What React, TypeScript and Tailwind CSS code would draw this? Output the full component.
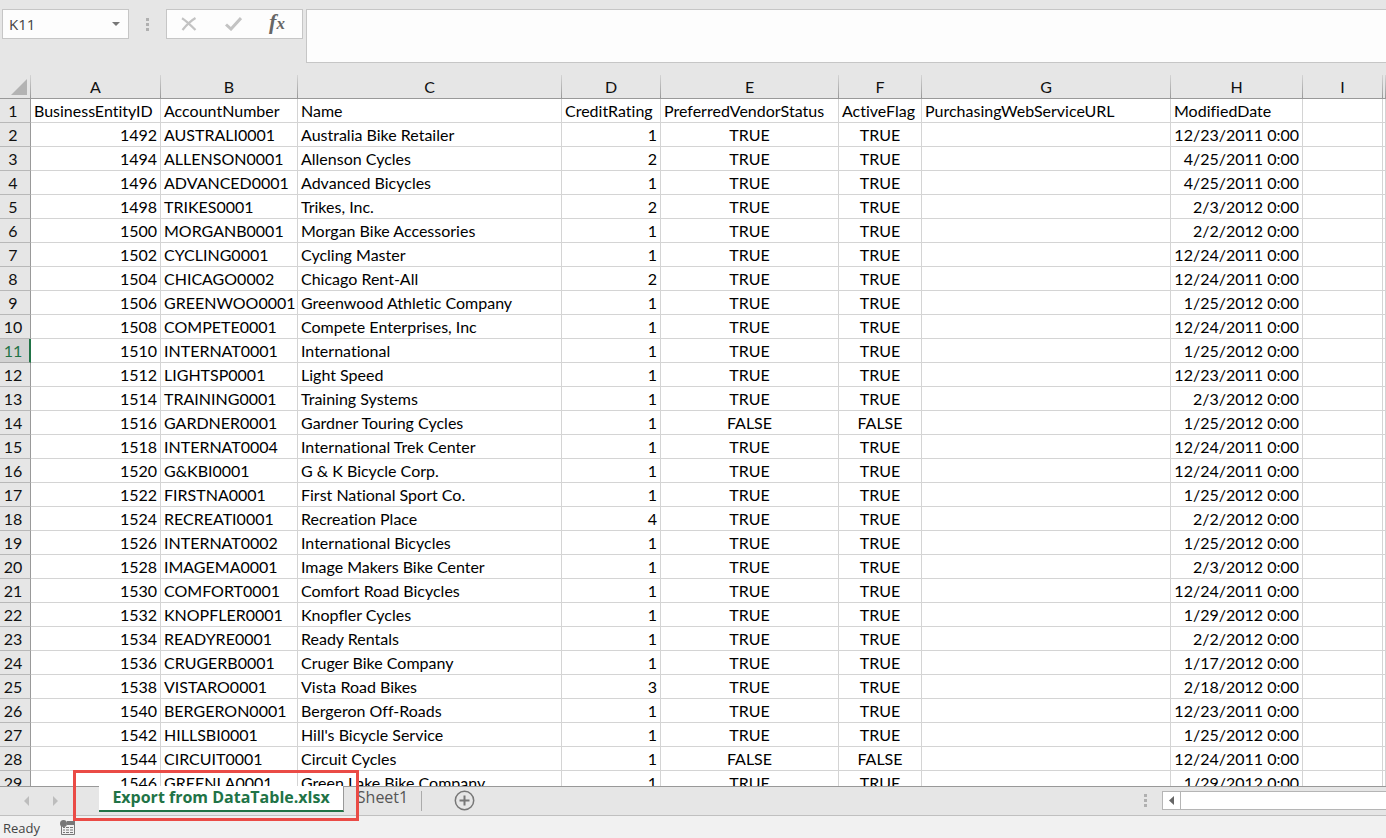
import React from 'react';

type Vendor = [number, string, string, number, boolean, string];

const vendors: Vendor[] = [
  [1492, 'AUSTRALI0001', 'Australia Bike Retailer', 1, true, '12/23/2011 0:00'],
  [1494, 'ALLENSON0001', 'Allenson Cycles', 2, true, '4/25/2011 0:00'],
  [1496, 'ADVANCED0001', 'Advanced Bicycles', 1, true, '4/25/2011 0:00'],
  [1498, 'TRIKES0001', 'Trikes, Inc.', 2, true, '2/3/2012 0:00'],
  [1500, 'MORGANB0001', 'Morgan Bike Accessories', 1, true, '2/2/2012 0:00'],
  [1502, 'CYCLING0001', 'Cycling Master', 1, true, '12/24/2011 0:00'],
  [1504, 'CHICAGO0002', 'Chicago Rent-All', 2, true, '12/24/2011 0:00'],
  [1506, 'GREENWOO0001', 'Greenwood Athletic Company', 1, true, '1/25/2012 0:00'],
  [1508, 'COMPETE0001', 'Compete Enterprises, Inc', 1, true, '12/24/2011 0:00'],
  [1510, 'INTERNAT0001', 'International', 1, true, '1/25/2012 0:00'],
  [1512, 'LIGHTSP0001', 'Light Speed', 1, true, '12/23/2011 0:00'],
  [1514, 'TRAINING0001', 'Training Systems', 1, true, '2/3/2012 0:00'],
  [1516, 'GARDNER0001', 'Gardner Touring Cycles', 1, false, '1/25/2012 0:00'],
  [1518, 'INTERNAT0004', 'International Trek Center', 1, true, '12/24/2011 0:00'],
  [1520, 'G&KBI0001', 'G & K Bicycle Corp.', 1, true, '12/24/2011 0:00'],
  [1522, 'FIRSTNA0001', 'First National Sport Co.', 1, true, '1/25/2012 0:00'],
  [1524, 'RECREATI0001', 'Recreation Place', 4, true, '2/2/2012 0:00'],
  [1526, 'INTERNAT0002', 'International Bicycles', 1, true, '1/25/2012 0:00'],
  [1528, 'IMAGEMA0001', 'Image Makers Bike Center', 1, true, '2/3/2012 0:00'],
  [1530, 'COMFORT0001', 'Comfort Road Bicycles', 1, true, '12/24/2011 0:00'],
  [1532, 'KNOPFLER0001', 'Knopfler Cycles', 1, true, '1/29/2012 0:00'],
  [1534, 'READYRE0001', 'Ready Rentals', 1, true, '2/2/2012 0:00'],
  [1536, 'CRUGERB0001', 'Cruger Bike Company', 1, true, '1/17/2012 0:00'],
  [1538, 'VISTARO0001', 'Vista Road Bikes', 3, true, '2/18/2012 0:00'],
  [1540, 'BERGERON0001', 'Bergeron Off-Roads', 1, true, '12/23/2011 0:00'],
  [1542, 'HILLSBI0001', "Hill's Bicycle Service", 1, true, '1/25/2012 0:00'],
  [1544, 'CIRCUIT0001', 'Circuit Cycles', 1, false, '12/24/2011 0:00'],
  [1546, 'GREENLA0001', 'Green Lake Bike Company', 1, true, '1/29/2012 0:00'],
];

const fields = [
  'BusinessEntityID',
  'AccountNumber',
  'Name',
  'CreditRating',
  'PreferredVendorStatus',
  'ActiveFlag',
  'PurchasingWebServiceURL',
  'ModifiedDate',
  '',
  '',
];

const letters = ['A', 'B', 'C', 'D', 'E', 'F', 'G', 'H', 'I', ''];

const alignments = [
  'text-right',
  'text-left',
  'text-left',
  'text-right',
  'text-center',
  'text-center',
  'text-left',
  'text-right',
  'text-left',
  'text-left',
];

const SELECTED_ROW = 11;

function Grip() {
  return (
    <svg width="3" height="13" viewBox="0 0 3 13" fill="#b0b0b0" aria-hidden="true">
      <path d="M0 0h3v3H0zM0 5h3v3H0zM0 10h3v3H0z" />
    </svg>
  );
}

function FormulaBar() {
  return (
    <header className="flex shrink-0 items-start pt-[9px] font-['Open_Sans',sans-serif]">
      <div className="ml-0.5 flex h-[30px] w-[127px] items-center border border-[#c6c6c6] bg-[#fdfdfd]">
        <input
          aria-label="Name Box"
          defaultValue="K11"
          className="h-full min-w-0 flex-1 bg-transparent pl-1.5 text-[15px] text-[#444] outline-none"
        />
        <button aria-label="Show defined names" className="flex h-full w-6 items-center justify-center">
          <svg width="8" height="4" viewBox="0 0 8 4" fill="#777">
            <path d="M0 0h8L4 4z" />
          </svg>
        </button>
      </div>
      <div className="flex h-[30px] w-[37px] items-center justify-center">
        <Grip />
      </div>
      <div className="flex h-[30px] w-[137px] items-center border border-[#c6c6c6] bg-[#fdfdfd] pr-[3px]">
        <button aria-label="Cancel" className="flex h-full flex-1 items-center justify-center">
          <svg width="16" height="14" viewBox="0 0 16 14" fill="none" stroke="#c3c3c3" strokeWidth="2.2">
            <path d="M1 1.2C5 3.5 10 8.500 14.500 13" />
            <path d="M14.500 1C9.500 4 5 8.500 1.500 13" />
          </svg>
        </button>
        <button aria-label="Enter" className="flex h-full flex-1 items-center justify-center">
          <svg width="17" height="14" viewBox="0 0 17 14" fill="none" stroke="#c3c3c3" strokeWidth="3">
            <path d="M1 7.500L6 12L16 1" />
          </svg>
        </button>
        <button
          aria-label="Insert Function"
          className="flex h-full flex-1 items-center justify-center pb-1 font-['Liberation_Serif',serif] text-[#666] italic"
        >
          <span className="text-[22px] leading-6 font-bold">f</span>
          <span className="pt-1 text-[17px] leading-6 font-bold">x</span>
        </button>
      </div>
      <input
        aria-label="Formula Bar"
        className="ml-[3px] h-[54px] min-w-0 flex-1 border border-r-0 border-[#c6c6c6] bg-[#fdfdfd] px-2 text-sm outline-none"
      />
    </header>
  );
}

function RowHeader({ n }: { n: number }) {
  const selected = n === SELECTED_ROW;
  return (
    <th
      scope="row"
      className={
        selected
          ? 'border-r-2 border-b border-r-[#217346] border-b-[#ababab] bg-[#d2d2d2] pr-[3px] text-center font-normal text-[#217346]'
          : 'border-r border-b border-r-[#999] border-b-[#b8b8b8] bg-[#e6e6e6] pr-1 text-center font-normal text-[#111]'
      }
    >
      {n}
    </th>
  );
}

function Grid() {
  return (
    <main className="min-h-0 flex-1 overflow-hidden border-b border-[#999] pt-3">
      <table className="w-full table-fixed border-separate border-spacing-0 font-['Lato',sans-serif] text-base leading-[23px] whitespace-nowrap text-black [font-variant-ligatures:none]">
        <colgroup>
          <col className="w-[31px]" />
          <col className="w-[130px]" />
          <col className="w-[137px]" />
          <col className="w-[264px]" />
          <col className="w-[99px]" />
          <col className="w-[178px]" />
          <col className="w-[83px]" />
          <col className="w-[249px]" />
          <col className="w-[132px]" />
          <col className="w-[80px]" />
          <col />
        </colgroup>
        <thead>
          <tr className="h-6">
            <td className="border-b border-[#999] bg-[linear-gradient(to_bottom,#d4d4d4,#999)] bg-[length:1px_100%] bg-right bg-no-repeat p-0">
              <svg width="16" height="16" viewBox="0 0 16 16" fill="#b3b3b3" className="ml-[11px]" aria-hidden="true">
                <path d="M16 0v16H0z" />
              </svg>
            </td>
            {letters.map((letter, i) => (
              <th
                key={i}
                scope="col"
                className="border-b border-[#999] bg-[linear-gradient(to_bottom,#d4d4d4,#999)] bg-[length:1px_100%] bg-right bg-no-repeat p-0 pr-px font-normal text-[#111]"
              >
                {letter}
              </th>
            ))}
          </tr>
        </thead>
        <tbody>
          <tr className="h-6">
            <RowHeader n={1} />
            {fields.map((field, i) => (
              <td key={i} className="border-r border-b border-[#d4d4d4] bg-white p-0 pl-[3px]">
                {field}
              </td>
            ))}
          </tr>
          {vendors.map(([id, account, name, rating, active, modified], r) => {
            const flag = active ? 'TRUE' : 'FALSE';
            return (
              <tr key={id} className="h-6">
                <RowHeader n={r + 2} />
                {[id, account, name, rating, flag, flag, '', modified, '', ''].map((value, i) => (
                  <td key={i} className={`border-r border-b border-[#d4d4d4] bg-white p-0 px-[3px] ${alignments[i]}`}>
                    {value}
                  </td>
                ))}
              </tr>
            );
          })}
        </tbody>
      </table>
    </main>
  );
}

function SheetTabs() {
  return (
    <nav
      aria-label="Sheets"
      className="relative flex h-[29px] shrink-0 items-start border-b border-[#c0c0c0] font-['Open_Sans',sans-serif]"
    >
      <div className="flex h-[27px] w-[99px] items-center gap-6 pl-6">
        <button aria-label="Previous sheet">
          <svg width="5" height="10" viewBox="0 0 5 10" fill="#bdbdbd">
            <path d="M5 0v10L0 5z" />
          </svg>
        </button>
        <button aria-label="Next sheet">
          <svg width="5" height="10" viewBox="0 0 5 10" fill="#bdbdbd">
            <path d="M0 0v10l5-5z" />
          </svg>
        </button>
      </div>
      <button className="-mt-px h-[26px] w-[245px] border-r border-b-2 border-r-[#999] border-b-[#217346] bg-white pb-0.5 text-base leading-5 font-bold whitespace-nowrap text-[#217346]">
        Export from DataTable.xlsx
      </button>
      <button className="h-5 w-[77px] text-base leading-5 text-[#555]">Sheet1</button>
      <span className="mt-1 h-5 w-px bg-[#ababab]" />
      <button aria-label="New sheet" className="mt-[3px] ml-8">
        <svg width="21" height="21" viewBox="0 0 21 21" fill="none" stroke="#777">
          <circle cx="10.500" cy="10.500" r="9.200" strokeWidth="1.500" />
          <path d="M10.500 5.500v10M5.500 10.500h10" strokeWidth="2" />
        </svg>
      </button>
      <div className="ml-auto flex h-[27px] items-center">
        <Grip />
        <div className="ml-[15px] flex h-[19px] w-[224px] border border-r-0 border-[#b5b5b5] bg-white">
          <button
            aria-label="Scroll left"
            className="flex w-[18px] items-center justify-center border-r border-[#b5b5b5]"
          >
            <svg width="5" height="9" viewBox="0 0 5 9" fill="#666">
              <path d="M5 0v9L0 4.500z" />
            </svg>
          </button>
        </div>
      </div>
      <div className="pointer-events-none absolute -top-[17px] left-[73px] h-[51px] w-[286px] border-3 border-[#ea4b46]" />
    </nav>
  );
}

function StatusBar() {
  return (
    <footer className="flex h-[22px] shrink-0 items-center gap-5 bg-[#f1f1f1] pl-[3px] font-['Open_Sans',sans-serif] text-[13px] text-[#444]">
      <span className="pt-1">Ready</span>
      <button aria-label="Record macro">
        <svg width="15" height="15" viewBox="0 0 15 15" fill="none">
          <path d="M1.500 6v8.500h13V1M7 2.500h8" stroke="#777" />
          <path d="M7 1h8v4H7z" fill="#777" />
          <circle cx="3.500" cy="3.500" r="3.500" fill="#777" />
          <path d="M3 7.500h2M6 7.500h3M10 7.500h3M3 10h2M6 10h3M10 10h3M3 12.500h2M6 12.500h3M10 12.500h3" stroke="#777" />
        </svg>
      </button>
    </footer>
  );
}

export default function App() {
  return (
    <div className="flex h-screen flex-col overflow-hidden bg-[#e6e6e6]">
      <FormulaBar />
      <Grid />
      <SheetTabs />
      <StatusBar />
    </div>
  );
}
